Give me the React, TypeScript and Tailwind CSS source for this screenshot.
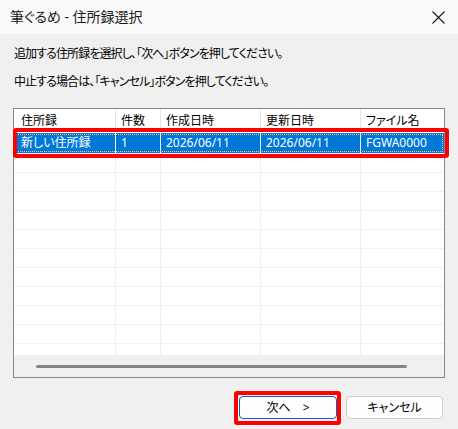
import React from "react";

const cols = [
  { w: "w-[102px]", pl: "pl-[7px]", h: "住所録", v: "新しい住所録" },
  { w: "w-[45px]", pl: "pl-[5px]", h: "件数", v: "1" },
  { w: "w-[100px]", pl: "pl-[5px]", h: "作成日時", v: "2026/06/11" },
  { w: "w-[100px]", pl: "pl-[5px]", h: "更新日時", v: "2026/06/11" },
  { w: "flex-1", pl: "pl-[5px]", h: "ファイル名", v: "FGWA0000" },
];

export default function App() {
  const empty = Array.from({ length: 11 });
  return (
    <div
      className="w-[458px] h-[429px] bg-[#f0f0f0] text-[#000] overflow-hidden [font-feature-settings:'palt']"
      style={{ fontFamily: '"Noto Sans", "Noto Sans CJK JP", sans-serif' }}
    >
      {/* title bar */}
      <div className="h-[34px] bg-[#f9f9f9] flex items-center justify-between pl-[10px] pr-[13px]">
        <span className="text-[14px] leading-[18px] text-[#1a1a1a]">筆ぐるめ - 住所録選択</span>
        <svg width="13" height="13" viewBox="0 0 13 13" className="text-[#1a1a1a]">
          <path d="M0.5 0.5 L12.5 12.5 M12.5 0.5 L0.5 12.5" stroke="currentColor" strokeWidth="1.1" />
        </svg>
      </div>

      <div className="pt-[12px] pl-[14px] text-[12px] leading-[16px] tracking-[-0.9px]">
        <p>追加する住所録を選択し、「次へ」ボタンを押してください。</p>
        <p className="mt-[12px]">中止する場合は、「キャンセル」ボタンを押してください。</p>
      </div>

      {/* table */}
      <div className="relative ml-[13px] mt-[18px] w-[432px] h-[270px] border border-[#828790] bg-white flex flex-col">
        <div className="h-[246px] overflow-hidden flex flex-col">
          <div className="h-[23px] flex shrink-0 text-[12px]">
            {cols.map((c, i) => (
              <div
                key={i}
                className={`${c.w} ${c.pl} h-full flex items-center ${i < 4 ? "border-r border-[#e5e5e5]" : ""}`}
              >
                {c.h}
              </div>
            ))}
          </div>
          <div className="h-[20px] mt-[1px] flex shrink-0 bg-[#0078d7] text-white text-[12px] relative">
            {cols.map((c, i) => (
              <div
                key={i}
                className={`${c.w} ${c.pl} h-full flex items-center ${i < 4 ? "border-r border-white" : ""}`}
              >
                {c.v}
              </div>
            ))}
            <div className="absolute inset-[1px] border border-dotted border-[#f7c48a] pointer-events-none" />
          </div>
          {empty.map((_, r) => (
            <div key={r} className="h-[19px] flex shrink-0 border-t border-[#f0f0f0]">
              {cols.map((c, i) => (
                <div key={i} className={`${c.w} h-full ${i < 4 ? "border-r border-[#f0f0f0]" : ""}`} />
              ))}
            </div>
          ))}
        </div>
        <div className="flex-1 bg-[#f0f0f0] flex items-center pl-[22px]">
          <div className="w-[371px] h-[3px] rounded-full bg-[#858585]" />
        </div>
        {/* red annotation */}
        <div className="absolute left-[-1px] top-[19px] w-[436px] h-[30px] border-[4px] border-[#ff0000] rounded-[3px] pointer-events-none" />
      </div>

      {/* buttons */}
      <div className="mt-[18px] flex justify-end gap-[9px] pr-[15px]">
        <div className="relative">
          <button className="w-[98px] h-[23px] bg-[#fdfdfd] border border-[#0067c0] rounded-[4px] text-[12px] leading-none flex items-center justify-center">
            次へ　&gt;
          </button>
          <div className="absolute -left-[5px] -top-[5px] -right-[4px] -bottom-[6px] border-[4px] border-[#ff0000] rounded-[3px] pointer-events-none" />
        </div>
        <button className="w-[97px] h-[23px] bg-[#fdfdfd] border border-[#d0d0d0] rounded-[4px] text-[12px] leading-none flex items-center justify-center">
          キャンセル
        </button>
      </div>
    </div>
  );
}
